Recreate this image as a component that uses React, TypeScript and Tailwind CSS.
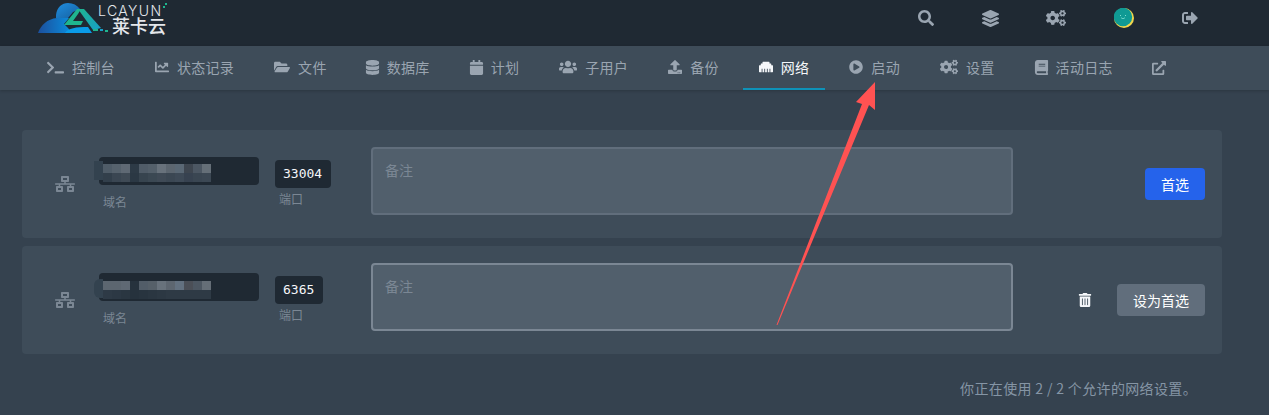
import type { IconType } from "react-icons";
import {
  FaBook,
  FaCalendar,
  FaChartLine,
  FaCogs,
  FaDatabase,
  FaEthernet,
  FaExternalLinkAlt,
  FaFolderOpen,
  FaLayerGroup,
  FaNetworkWired,
  FaPlayCircle,
  FaSearch,
  FaSignOutAlt,
  FaTerminal,
  FaTrashAlt,
  FaUpload,
  FaUsers,
} from "react-icons/fa";

const cjk = "font-['Noto_Sans_CJK_SC','Liberation_Sans',sans-serif]";

// slot = icon start to label start, minus the 8px gap
const navItems: { label: string; icon: IconType; size: string; slot: string; active?: boolean }[] = [
  { label: "控制台", icon: FaTerminal, size: "text-[17px]", slot: "w-[18px]" },
  { label: "状态记录", icon: FaChartLine, size: "text-[14px]", slot: "w-[14px]" },
  { label: "文件", icon: FaFolderOpen, size: "text-[16px]", slot: "w-4" },
  { label: "数据库", icon: FaDatabase, size: "text-[15px]", slot: "w-3" },
  { label: "计划", icon: FaCalendar, size: "text-[15px]", slot: "w-[13px]" },
  { label: "子用户", icon: FaUsers, size: "text-[18px]", slot: "w-[18px]" },
  { label: "备份", icon: FaUpload, size: "text-[14px]", slot: "w-[14px]" },
  { label: "网络", icon: FaEthernet, size: "text-[14px]", slot: "w-[14px]", active: true },
  { label: "启动", icon: FaPlayCircle, size: "text-[14px]", slot: "w-[14px]" },
  { label: "设置", icon: FaCogs, size: "text-[18px]", slot: "w-[18px]" },
  { label: "活动日志", icon: FaBook, size: "text-[15px]", slot: "w-[13px]" },
];

const mosaicOne = [
  ["bg-[#4f5c68]", "bg-[#56626d]", "bg-[#5f6974]", "bg-[#2d3a46]", "bg-[#505c68]", "bg-[#54606b]", "bg-[#68727c]", "bg-[#5c6670]", "bg-[#5a6875]", "bg-[#3e4650]", "bg-[#4c5763]", "bg-[#656f78]"],
  ["bg-[#323f4b]", "bg-[#3a4652]", "bg-[#3f4a55]", "bg-[#2b3844]", "bg-[#37444f]", "bg-[#3b4853]", "bg-[#3f4a56]", "bg-[#3b4753]", "bg-[#3e4a57]", "bg-[#374250]", "bg-[#3a4652]", "bg-[#3c4854]"],
];

const mosaicTwo = [
  ["bg-[#5c6670]", "bg-[#5c6670]", "bg-[#5f6974]", "bg-[#26323d]", "bg-[#525d68]", "bg-[#566069]", "bg-[#68727c]", "bg-[#5d6670]", "bg-[#637180]", "bg-[#4b4f57]", "bg-[#4d5762]", "bg-[#656e77]"],
  ["bg-[#2e3a46]", "bg-[#2c3844]", "bg-[#2a3641]", "bg-[#26323d]", "bg-[#28343f]", "bg-[#2a3641]", "bg-[#2c3843]", "bg-[#2e3a45]", "bg-[#2e3a45]", "bg-[#2e3a45]", "bg-[#2e3a45]", "bg-[#2e3a45]"],
];

function Logo() {
  return (
    <div className="relative h-[46px] w-[140px]">
      <svg width="80" height="36" viewBox="0 0 80 36" className="absolute left-0 top-0">
        <defs>
          <linearGradient id="cloud" x1="0" y1="0" x2="1" y2="0">
            <stop offset="0" stopColor="#1c4f9c" />
            <stop offset="1" stopColor="#0a8fe0" />
          </linearGradient>
          <linearGradient id="peak" x1="0" y1="0" x2="1" y2="1">
            <stop offset="0" stopColor="#1f8ee0" />
            <stop offset="1" stopColor="#16609f" />
          </linearGradient>
          <linearGradient id="leg" x1="0" y1="0" x2="1" y2="1">
            <stop offset="0" stopColor="#1fb58f" />
            <stop offset="1" stopColor="#17a0c8" />
          </linearGradient>
        </defs>
        <path d="M18 15 C19 7 24 3 30 3 C35 3 39 5 42 9 L35 12 L30 18 L18 18 Z" fill="url(#peak)" />
        <path d="M0 33 C3 25 9 19 19 18 L31 18 L26 24 L30 28 L34 33 Z" fill="url(#cloud)" />
        <path d="M27 33 C30 28 38 27 50 27 L54 33 Z" fill="#0a9be8" />
        <path d="M26 25 L39 9 L43 9 L40 14 L35 21 L45 21 L43 25 Z" fill="#1fb58f" />
        <path d="M40 9 L46 9 L63 28 L55 30 Z" fill="url(#leg)" />
        <rect x="55" y="29" width="5" height="2" fill="#1fb58f" />
        <rect x="62" y="29" width="3" height="2" fill="#17a0c8" />
        <rect x="67" y="30" width="3" height="2" fill="#1fb58f" />
      </svg>
      <span className="absolute left-[60px] top-[5px] font-['Inter',sans-serif] text-[14px] font-light leading-[12px] tracking-[1.4px] text-[#e4e7eb]">
        LCAYUN
      </span>
      <span className={`absolute left-[74px] top-[17px] text-[18px] font-medium leading-[16px] text-[#e4e7eb] ${cjk}`}>
        莱卡云
      </span>
      <span className="absolute left-[127px] top-[3px] h-[2px] w-[2px] bg-[#1fb58f]" />
      <span className="absolute left-[125px] top-[6px] h-[2px] w-[2px] bg-[#1fb58f]" />
    </div>
  );
}

function Avatar() {
  return (
    <svg width="20" height="20" viewBox="0 0 20 20">
      <circle cx="10" cy="10" r="10" fill="#f2d64b" />
      <circle cx="9" cy="9" r="9.2" fill="#0f9a94" />
      <path d="M7 9.5 C8 11 10 11 11 9.5" stroke="#7fe0d0" strokeWidth="0.8" fill="none" />
      <rect x="6" y="7" width="1" height="1" fill="#7fe0d0" />
      <rect x="11" y="7" width="1" height="1" fill="#7fe0d0" />
    </svg>
  );
}

function Header() {
  return (
    <header className="flex h-[46px] items-start justify-between bg-[#1f2933] pl-[38px] pr-[67px]">
      <Logo />
      <div className="flex h-9 items-center text-[#9aa5b1]">
        <div className="flex w-6 justify-center"><FaSearch className="text-[16px]" /></div>
        <div className="ml-10 flex w-6 justify-center"><FaLayerGroup className="text-[17px]" /></div>
        <div className="ml-[42px] flex w-6 justify-center"><FaCogs className="text-[20px]" /></div>
        <div className="ml-11 flex w-6 justify-center"><Avatar /></div>
        <div className="ml-[42px] flex w-6 justify-center"><FaSignOutAlt className="text-[16px]" /></div>
      </div>
    </header>
  );
}

function Nav() {
  return (
    <nav className={`flex h-11 items-stretch bg-[#3e4c59] pl-[30px] text-sm shadow-[0_1px_3px_rgba(0,0,0,0.2)] ${cjk}`}>
      {navItems.map(({ label, icon: Icon, size, slot, active }) => (
        <a
          key={label}
          className={`mr-2 flex items-center gap-2 border-b-2 px-4 tracking-[0.3px] ${
            active ? "border-[#0e92b8] text-[#f5f7fa]" : "border-transparent text-[#9aa5b1]"
          }`}
        >
          <span className={`flex justify-center ${slot}`}>
            <Icon className={`shrink-0 ${size}`} />
          </span>
          <span>{label}</span>
        </a>
      ))}
      <a className="-ml-px flex items-center px-4 text-[#9aa5b1]">
        <FaExternalLinkAlt className="text-[14px]" />
      </a>
    </nav>
  );
}

function Mosaic({ rows, second }: { rows: string[][]; second?: boolean }) {
  return (
    <div className={`absolute -left-[5px] flex ${second ? "top-[8px]" : "top-[7px]"}`}>
      <div className={`h-[19px] w-[9px] bg-[#33424f] ${second ? "-mt-[2px] rounded-l-md" : "-mt-[3px]"}`} />
      <div>
        {rows.map((row, i) => (
          <div key={i} className="flex">
            {row.map((c, j) => (
              <div key={j} className={`h-[9px] w-[9px] ${c}`} />
            ))}
          </div>
        ))}
      </div>
    </div>
  );
}

function AllocationRow({
  port,
  rows,
  second,
}: {
  port: string;
  rows: string[][];
  second?: boolean;
}) {
  return (
    <div className="flex h-[108px] items-center rounded bg-[#3e4c59] pl-[33px] pr-[17px]">
      <FaNetworkWired className="w-5 text-[20px] text-[#7b8794]" />
      <div className="ml-6 w-40">
        <div className="relative h-7 rounded bg-[#1f2933]">
          <Mosaic rows={rows} second={second} />
        </div>
        <div className="mt-2 pl-1 text-xs leading-[18px] text-[#7b8794]">域名</div>
      </div>
      <div className="ml-4 w-24">
        <div className="flex h-7 w-fit items-center rounded bg-[#1f2933] px-2 pr-[9px] font-['DejaVu_Sans_Mono',monospace] text-[13px] text-[#f5f7fa]">
          {port}
        </div>
        <div className="mt-[2px] pl-1 text-xs leading-[18px] text-[#7b8794]">端口</div>
      </div>
      <div className="pb-[6px]">
        <textarea
          readOnly
          placeholder="备注"
          className={`block h-[68px] w-[642px] resize-none rounded border-2 bg-[#515f6c] px-3 py-[11px] text-sm text-[#cbd2d9] outline-none placeholder:text-[#7b8794] ${
            second ? "border-[#7b8794]" : "border-[#616e7c]"
          }`}
        />
      </div>
      <div className="flex flex-1 items-center justify-end">
        {second ? (
          <>
            <FaTrashAlt className="text-[14px] text-[#f5f7fa]" />
            <button className="ml-[25px] h-8 w-[88px] rounded bg-[#616e7c] text-sm text-white">设为首选</button>
          </>
        ) : (
          <button className="h-8 w-[60px] rounded bg-[#2563eb] text-sm text-white">首选</button>
        )}
      </div>
    </div>
  );
}

export default function App() {
  return (
    <div className={`relative h-[415px] overflow-hidden bg-[#35424f] ${cjk}`}>
      <Header />
      <Nav />
      <main className="flex flex-col gap-2 pl-[22px] pr-[47px] pt-10">
        <AllocationRow port="33004" rows={mosaicOne} />
        <AllocationRow port="6365" rows={mosaicTwo} second />
        <p className="mt-[14px] pr-[25px] text-right text-sm leading-[24px] tracking-[0.35px] text-[#8595a5]">
          你正在使用 2 / 2 个允许的网络设置。
        </p>
      </main>
      {/* red annotation arrow drawn over the page */}
      <svg width="1269" height="415" className="pointer-events-none absolute left-0 top-0">
        <polygon points="875,82 856,102 862,104 776.5,325 777.5,325 869,105 875,110" fill="#ff5252" />
      </svg>
    </div>
  );
}
